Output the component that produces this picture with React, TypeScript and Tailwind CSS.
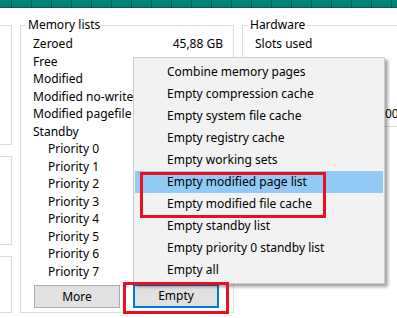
import React from 'react';

const memoryRows: { label: string; value?: string; indent?: boolean }[] = [
  { label: 'Zeroed', value: '45,88 GB' },
  { label: 'Free' },
  { label: 'Modified' },
  { label: 'Modified no-write' },
  { label: 'Modified pagefile' },
  { label: 'Standby' },
  { label: 'Priority 0', indent: true },
  { label: 'Priority 1', indent: true },
  { label: 'Priority 2', indent: true },
  { label: 'Priority 3', indent: true },
  { label: 'Priority 4', indent: true },
  { label: 'Priority 5', indent: true },
  { label: 'Priority 6', indent: true },
  { label: 'Priority 7', indent: true },
];

// rows under the menu stay blank, only the tail of the last value peeks out
const hardwareRows = [
  { label: 'Slots used', value: '' },
  { label: '', value: '' },
  { label: '', value: '' },
  { label: '', value: '' },
  { label: '', value: '00' },
];

const menuItems = [
  'Combine memory pages',
  'Empty compression cache',
  'Empty system file cache',
  'Empty registry cache',
  'Empty working sets',
  'Empty modified page list',
  'Empty modified file cache',
  'Empty standby list',
  'Empty priority 0 standby list',
  'Empty all',
];

export default function App() {
  return (
    <div
      className="relative w-[397px] h-[318px] overflow-hidden bg-white text-[12px] text-black"
      style={{ fontFamily: '"Noto Sans", sans-serif' }}
    >
      {/* title strip */}
      <div className="flex h-[8px] border-b border-[#0a5a50] bg-[#008378]">
        {Array.from({ length: 20 }).map((_, i) => (
          <div key={i} className="w-[20px] shrink-0 border-r border-[#0a5a50] first:w-[12px]" />
        ))}
      </div>

      <div className="flex items-start">
        {/* left column, mostly cut off */}
        <div className="w-[12px] shrink-0 overflow-hidden pt-[17px]">
          <div className="ml-[-28px] flex w-[40px] flex-col">
            <div className="h-[120px] border border-[#dcdcdc]" />
            <div className="mt-[11px] h-[89px] border border-[#dcdcdc]" />
            <div className="mt-[11px] h-[57px] border border-[#dcdcdc]" />
          </div>
        </div>

        <fieldset className="ml-[8px] mt-[9px] h-[296px] w-[214px] shrink-0 border border-[#dcdcdc] px-[12px]">
          <legend className="ml-[-7px] px-[2px] leading-[16px]">Memory lists</legend>
          <div className="pt-[2px]">
            {memoryRows.map((r) => (
              <div key={r.label} className="flex h-[17.5px] items-center justify-between leading-[17.5px]">
                <span className={r.indent ? 'pl-[15px]' : ''}>{r.label}</span>
                <span className="mr-[-2px]">{r.value}</span>
              </div>
            ))}
          </div>
          <div className="mt-[5px] ml-[1px] flex gap-[13px]">
            <button className="h-[23px] w-[86px] border border-[#adadad] bg-[#e1e1e1] leading-[20px]">More</button>
            <button className="mt-[-1px] h-[24px] w-[86px] border-2 border-[#0078d7] bg-[#e1e1e1] leading-[20px]">
              Empty
            </button>
          </div>
        </fieldset>

        <fieldset className="ml-[8px] mt-[9px] h-[110px] w-[200px] shrink-0 border border-[#dcdcdc] pl-[12px]">
          <legend className="ml-[-7px] px-[2px] leading-[16px]">Hardware</legend>
          <div className="pt-[2px]">
            {hardwareRows.map((r, i) => (
              <div key={i} className="flex h-[17.5px] items-center leading-[17.5px]">
                <span className="w-[130px] shrink-0">{r.label}</span>
                <span>{r.value}</span>
              </div>
            ))}
          </div>
        </fieldset>
      </div>

      {/* context menu */}
      <div className="absolute left-[133px] top-[57px] h-[227px] w-[252px] border border-[#cccccc] bg-[#f2f2f2] px-[1px] pt-[3px] shadow-[3px_3px_3px_rgba(0,0,0,0.35)]">
        {menuItems.map((m) => (
          <div
            key={m}
            className={`flex h-[22px] items-center pl-[32px] ${m === 'Empty modified page list' ? 'bg-[#91c9f7]' : ''}`}
          >
            {m}
          </div>
        ))}
      </div>

      {/* red annotation frames */}
      <div className="absolute left-[140px] top-[172px] h-[46px] w-[186px] border-[3px] border-[#e81123]" />
      <div className="absolute left-[123px] top-[282px] h-[32px] w-[106px] border-[3px] border-[#e81123]" />
    </div>
  );
}
